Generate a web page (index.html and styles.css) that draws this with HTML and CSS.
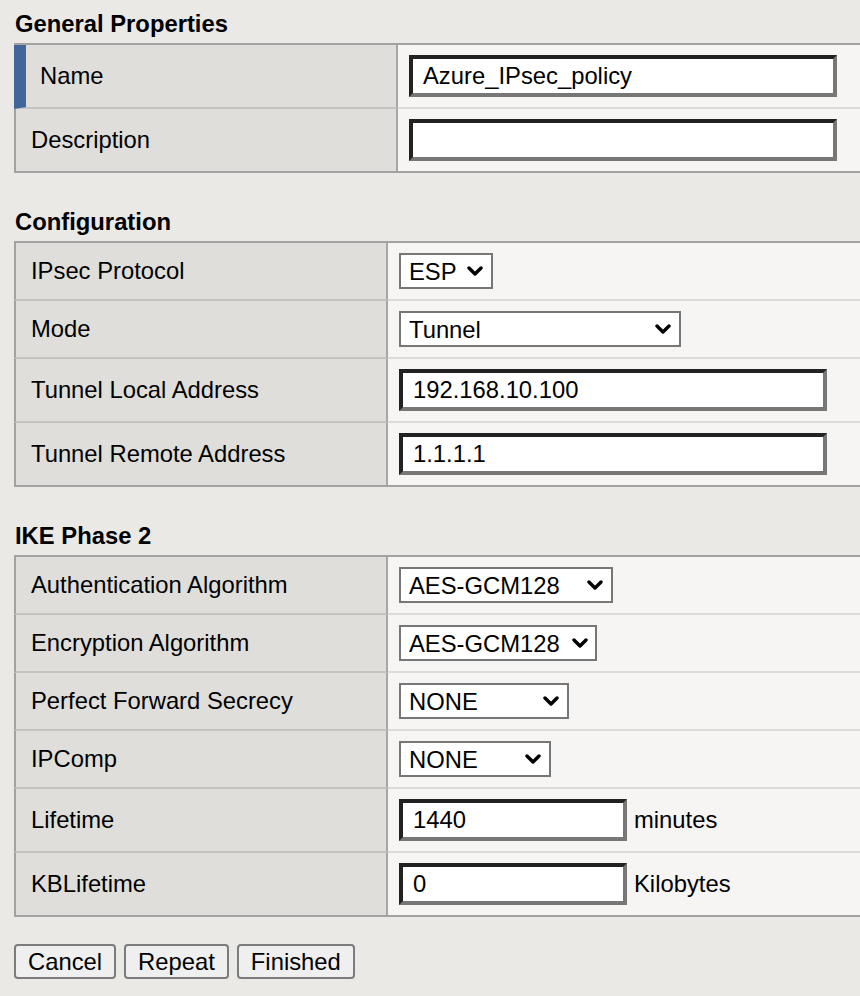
FILE: index.html
```html
<!DOCTYPE html>
<html>
<head>
<meta charset="utf-8">
<link rel="stylesheet" href="styles.css">
</head>
<body>
<h2 class="heading">General Properties</h2>
<table class="props wide">
  <tr>
    <td class="label label-active">Name</td>
    <td class="value"><div class="field"><input class="text text-full" type="text" value="Azure_IPsec_policy"></div></td>
  </tr>
  <tr>
    <td class="label">Description</td>
    <td class="value"><div class="field"><input class="text text-full" type="text" value=""></div></td>
  </tr>
</table>

<h2 class="heading">Configuration</h2>
<table class="props">
  <tr>
    <td class="label">IPsec Protocol</td>
    <td class="value"><div class="field"><span class="select"><select class="w-esp"><option>ESP</option></select><svg class="chev" viewBox="0 0 16 10" width="16" height="10"><path d="M2 2 L8 8 L14 2" fill="none" stroke="#000" stroke-width="3.4" stroke-linecap="round" stroke-linejoin="round"/></svg></span></div></td>
  </tr>
  <tr>
    <td class="label">Mode</td>
    <td class="value"><div class="field"><span class="select"><select class="w-mode"><option>Tunnel</option></select><svg class="chev" viewBox="0 0 16 10" width="16" height="10"><path d="M2 2 L8 8 L14 2" fill="none" stroke="#000" stroke-width="3.4" stroke-linecap="round" stroke-linejoin="round"/></svg></span></div></td>
  </tr>
  <tr>
    <td class="label">Tunnel Local Address</td>
    <td class="value"><div class="field"><input class="text text-full" type="text" value="192.168.10.100"></div></td>
  </tr>
  <tr>
    <td class="label">Tunnel Remote Address</td>
    <td class="value"><div class="field"><input class="text text-full" type="text" value="1.1.1.1"></div></td>
  </tr>
</table>

<h2 class="heading">IKE Phase 2</h2>
<table class="props">
  <tr>
    <td class="label">Authentication Algorithm</td>
    <td class="value"><div class="field"><span class="select"><select class="w-auth"><option>AES-GCM128</option></select><svg class="chev" viewBox="0 0 16 10" width="16" height="10"><path d="M2 2 L8 8 L14 2" fill="none" stroke="#000" stroke-width="3.4" stroke-linecap="round" stroke-linejoin="round"/></svg></span></div></td>
  </tr>
  <tr>
    <td class="label">Encryption Algorithm</td>
    <td class="value"><div class="field"><span class="select"><select class="w-enc"><option>AES-GCM128</option></select><svg class="chev chev-tight" viewBox="0 0 16 10" width="16" height="10"><path d="M2 2 L8 8 L14 2" fill="none" stroke="#000" stroke-width="3.4" stroke-linecap="round" stroke-linejoin="round"/></svg></span></div></td>
  </tr>
  <tr>
    <td class="label">Perfect Forward Secrecy</td>
    <td class="value"><div class="field"><span class="select"><select class="w-pfs"><option>NONE</option></select><svg class="chev" viewBox="0 0 16 10" width="16" height="10"><path d="M2 2 L8 8 L14 2" fill="none" stroke="#000" stroke-width="3.4" stroke-linecap="round" stroke-linejoin="round"/></svg></span></div></td>
  </tr>
  <tr>
    <td class="label">IPComp</td>
    <td class="value"><div class="field"><span class="select"><select class="w-comp"><option>NONE</option></select><svg class="chev" viewBox="0 0 16 10" width="16" height="10"><path d="M2 2 L8 8 L14 2" fill="none" stroke="#000" stroke-width="3.4" stroke-linecap="round" stroke-linejoin="round"/></svg></span></div></td>
  </tr>
  <tr>
    <td class="label">Lifetime</td>
    <td class="value"><div class="field"><input class="text text-short" type="text" value="1440"><span class="unit">minutes</span></div></td>
  </tr>
  <tr>
    <td class="label">KBLifetime</td>
    <td class="value"><div class="field"><input class="text text-short" type="text" value="0"><span class="unit">Kilobytes</span></div></td>
  </tr>
</table>

<div class="actions">
  <button class="btn" type="button">Cancel</button>
  <button class="btn" type="button">Repeat</button>
  <button class="btn" type="button">Finished</button>
</div>
</body>
</html>
```

FILE: styles.css
```css
html, body {
  margin: 0;
  padding: 0;
}

body {
  background: #eae9e6;
  padding: 0 0 0 14px;
  font-family: "Liberation Sans", Arial, Helvetica, sans-serif;
  font-size: 23.8px;
  color: #000;
  overflow: hidden;
}

.heading {
  font-size: 23.8px;
  font-weight: bold;
  line-height: 27px;
  margin: 35px 0 6px 1px;
}

.heading:first-child {
  margin-top: 10px;
}

.props {
  width: 846px;
  table-layout: fixed;
  border-collapse: separate;
  border-spacing: 0;
  border-top: 2px solid #a2a2a2;
  border-bottom: 2px solid #a2a2a2;
}

.props td {
  padding: 0;
  box-sizing: border-box;
}

.label {
  width: 374px;
  background: #dfdedb;
  border-left: 2px solid #a2a2a2;
  border-right: 2px solid #a6a6a6;
  border-bottom: 2px solid #c3c3c2;
  padding: 0 10px 0 15px !important;
  vertical-align: middle;
  white-space: nowrap;
}

.wide .label {
  width: 384px;
}

.label-active {
  border-left: 12px solid #41679a;
  padding-left: 14px !important;
}

.value {
  background: #f6f5f3;
  border-bottom: 2px solid #dcdbd9;
  vertical-align: middle;
}

.props tr:last-child td {
  border-bottom: none;
}

.field {
  display: flex;
  align-items: center;
  padding: 10px 11px;
}

.text {
  box-sizing: border-box;
  height: 42px;
  font: inherit;
  color: #000;
  background: #fff;
  border-style: solid;
  border-width: 4px;
  border-color: #222 #777 #777 #222;
  padding: 0 0 0 10px;
  margin: 0;
  outline: none;
}

.text-full {
  width: 428px;
}

.text-short {
  width: 228px;
}

.unit {
  margin-left: 7px;
}

.select {
  position: relative;
  display: inline-block;
  height: 36px;
}

.select select {
  -webkit-appearance: none;
  appearance: none;
  display: block;
  box-sizing: border-box;
  height: 36px;
  font: inherit;
  line-height: normal;
  color: #000;
  background: #fff;
  border: 2px solid #767676;
  border-radius: 0;
  padding: 0 30px 0 8px;
  margin: 0;
  outline: none;
}

.chev {
  position: absolute;
  right: 10px;
  top: 13px;
  pointer-events: none;
}

.chev-tight {
  right: 9px;
}

.w-esp { width: 94px; }
.w-mode { width: 282px; }
.w-auth { width: 214px; }
.w-enc { width: 198px; }
.w-pfs { width: 170px; }
.w-comp { width: 152px; }

.actions {
  display: flex;
  gap: 8px;
  margin-top: 27px;
}

.btn {
  box-sizing: border-box;
  height: 35px;
  font: inherit;
  color: #000;
  background: #efefef;
  border: 2px solid #7c7c7c;
  border-radius: 4px;
  padding: 0 12px;
  margin: 0;
}
```
